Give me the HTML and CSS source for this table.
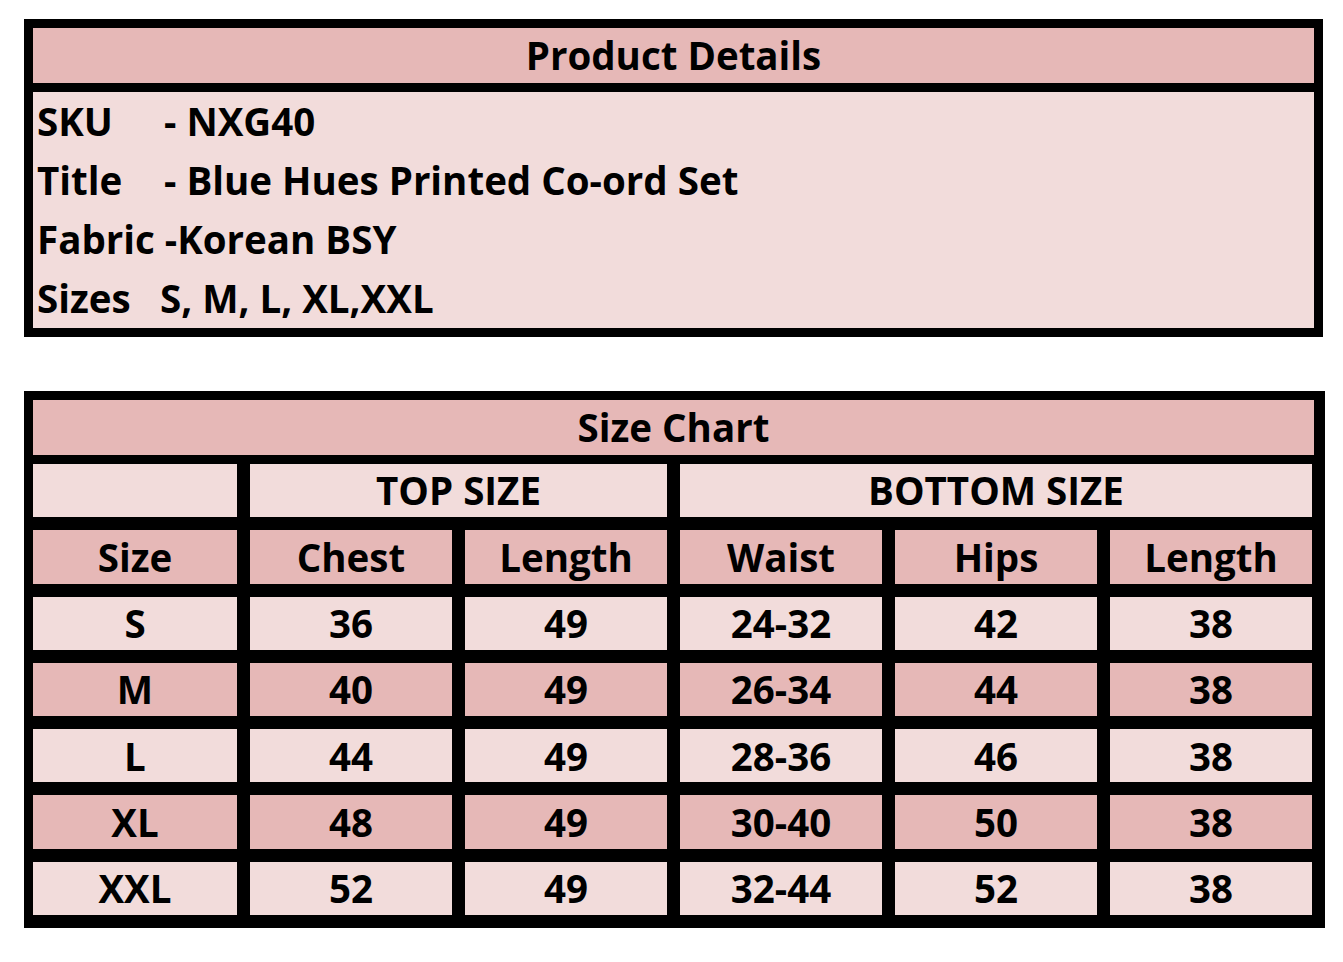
FILE: index.html
```html
<!DOCTYPE html>
<html>
<head>
<meta charset="utf-8">
<link rel="stylesheet" href="styles.css">
</head>
<body>
<div class="page">
  <section class="details">
    <div class="details-title">Product Details</div>
    <div class="details-body">
      <div class="line"><span class="label">SKU</span> - NXG40</div>
      <div class="line"><span class="label">Title</span> - Blue Hues Printed Co-ord Set</div>
      <div class="line"><span class="label-auto">Fabric</span> -Korean BSY</div>
      <div class="line"><span class="label label-sizes">Sizes</span> S, M, L, XL,XXL</div>
    </div>
  </section>

  <section class="chart">
    <div class="chart-title">Size Chart</div>
    <div class="grid">
      <div class="cell light"></div>
      <div class="cell light span3">TOP SIZE</div>
      <div class="cell light span3b">BOTTOM SIZE</div>

      <div class="cell dark">Size</div>
      <div class="cell dark">Chest</div>
      <div class="cell dark">Length</div>
      <div class="cell dark">Waist</div>
      <div class="cell dark">Hips</div>
      <div class="cell dark">Length</div>

      <div class="cell light">S</div>
      <div class="cell light">36</div>
      <div class="cell light">49</div>
      <div class="cell light">24-32</div>
      <div class="cell light">42</div>
      <div class="cell light">38</div>

      <div class="cell dark">M</div>
      <div class="cell dark">40</div>
      <div class="cell dark">49</div>
      <div class="cell dark">26-34</div>
      <div class="cell dark">44</div>
      <div class="cell dark">38</div>

      <div class="cell light">L</div>
      <div class="cell light">44</div>
      <div class="cell light">49</div>
      <div class="cell light">28-36</div>
      <div class="cell light">46</div>
      <div class="cell light">38</div>

      <div class="cell dark">XL</div>
      <div class="cell dark">48</div>
      <div class="cell dark">49</div>
      <div class="cell dark">30-40</div>
      <div class="cell dark">50</div>
      <div class="cell dark">38</div>

      <div class="cell light">XXL</div>
      <div class="cell light">52</div>
      <div class="cell light">49</div>
      <div class="cell light">32-44</div>
      <div class="cell light">52</div>
      <div class="cell light">38</div>
    </div>
  </section>
</div>
</body>
</html>
```

FILE: styles.css
```css
html, body {
  margin: 0;
  padding: 0;
  background: #ffffff;
}

body {
  font-family: "Open Sans", "Liberation Sans", sans-serif;
  font-weight: 700;
  color: #000;
}

.page {
  padding: 19px 0 0 24px;
  display: flex;
  flex-direction: column;
  gap: 54px;
}

.details {
  width: 1299px;
  box-sizing: border-box;
  background: #000;
  padding: 9px;
  display: flex;
  flex-direction: column;
  gap: 9px;
}

.details-title {
  background: #e6b8b7;
  height: 55px;
  display: flex;
  align-items: center;
  justify-content: center;
  font-size: 38.5px;
  line-height: 1;
}

.details-body {
  background: #f2dcdb;
  height: 236px;
  display: flex;
  flex-direction: column;
  padding: 0 0 0 4px;
}

.line {
  height: 59px;
  display: flex;
  align-items: center;
  font-size: 38.5px;
  line-height: 1;
  white-space: pre;
}

.label {
  display: inline-block;
  width: 117px;
}

.label-sizes {
  width: 113px;
}

.chart {
  width: 1301px;
  box-sizing: border-box;
  background: #000;
  padding: 9px 13px 13px 9px;
}

.chart-title {
  background: #e6b8b7;
  height: 55px;
  margin-right: -2px;
  display: flex;
  align-items: center;
  justify-content: center;
  font-size: 38.5px;
  line-height: 1;
}

.grid {
  margin-top: 9px;
  display: grid;
  grid-template-columns: 204px repeat(5, 202px);
  grid-auto-rows: 53.3px;
  column-gap: 13px;
  row-gap: 13px;
}

.cell {
  display: flex;
  align-items: center;
  justify-content: center;
  font-size: 38.5px;
  line-height: 1;
}

.span3 {
  grid-column: 2 / span 2;
}

.span3b {
  grid-column: 4 / span 3;
}

.light {
  background: #f2dcdb;
}

.dark {
  background: #e6b8b7;
}
```
